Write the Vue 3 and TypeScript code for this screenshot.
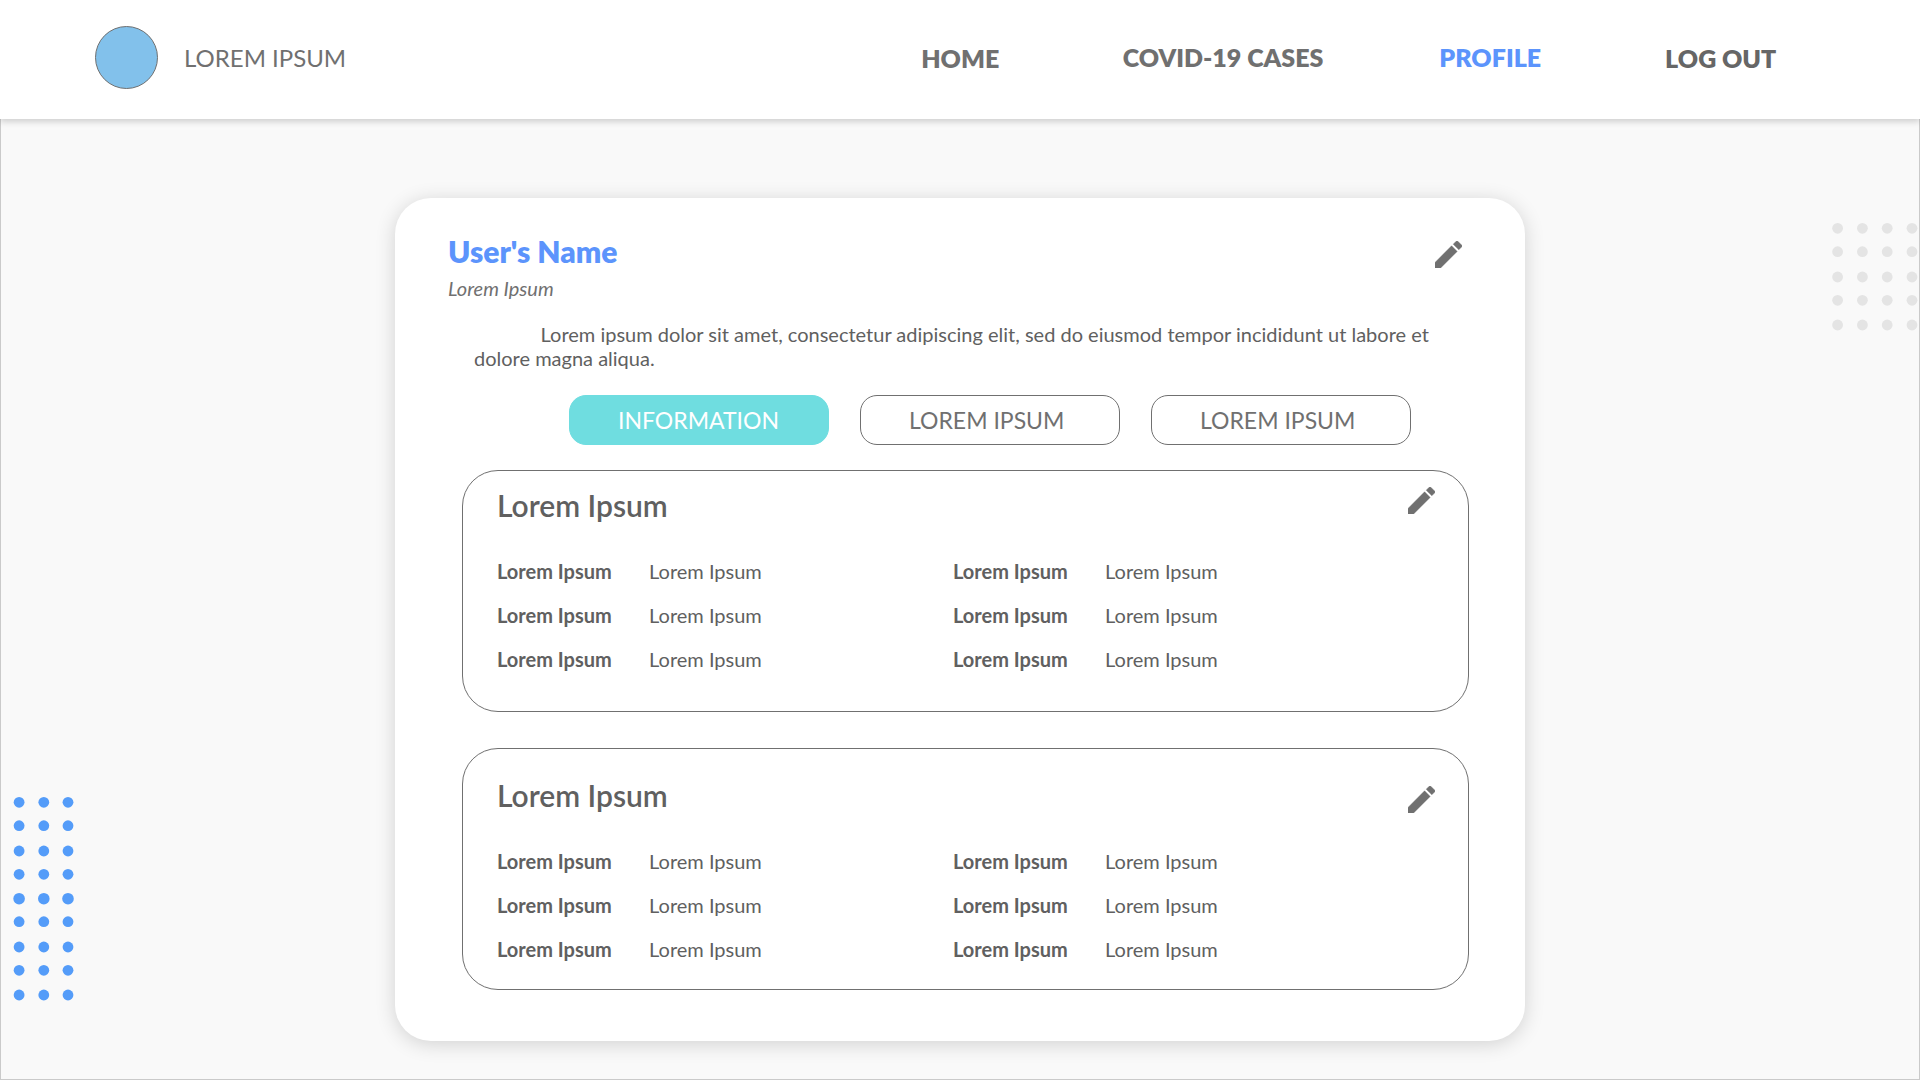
<script setup lang="ts">
interface NavItem {
  label: string
  key: string
}

interface Panel {
  id: string
  title: string
  rows: number
}

const nav: NavItem[] = [
  { label: 'HOME', key: 'home' },
  { label: 'COVID-19 CASES', key: 'cases' },
  { label: 'PROFILE', key: 'profile' },
  { label: 'LOG OUT', key: 'logout' },
]

const tabs: string[] = ['INFORMATION', 'LOREM IPSUM', 'LOREM IPSUM']

const panels: Panel[] = [
  { id: 'first', title: 'Lorem Ipsum', rows: 3 },
  { id: 'second', title: 'Lorem Ipsum', rows: 3 },
]

const pencil =
  'M3 17.25V21h3.75L17.81 9.94l-3.75-3.75L3 17.25zM20.71 7.04a1 1 0 0 0 0-1.41l-2.34-2.34a1 1 0 0 0-1.41 0l-1.83 1.83 3.75 3.75 1.83-1.83z'

const blueX = [7.1, 31.8, 56]
const blueY = [7.3, 30.7, 56, 79.3, 103.7, 126.7, 152, 175.3, 200]
const greyX = [7.6, 32.4, 57.2, 82]
const greyY = [7.3, 30.7, 56, 79.3, 104]
</script>

<template>
  <div class="page">
    <header class="topbar">
      <div class="logo"></div>
      <span class="brand">LOREM IPSUM</span>
      <nav class="nav">
        <a v-for="item in nav" :key="item.key" :class="['link', item.key]">{{ item.label }}</a>
      </nav>
    </header>

    <main class="content">
      <svg class="dots dots-blue" width="66" height="210" fill="#549cf9">
        <template v-for="(y, r) in blueY" :key="y">
          <circle v-for="x in blueX" :key="x" :cx="x" :cy="y" :r="r === 4 ? 5.8 : 5.4" />
        </template>
      </svg>
      <svg class="dots dots-grey" width="89" height="112" fill="#e4e4e4">
        <template v-for="y in greyY" :key="y">
          <circle v-for="x in greyX" :key="x" :cx="x" :cy="y" r="5.4" />
        </template>
      </svg>

      <section class="card">
        <div class="head">
          <div>
            <h1 class="name">User's Name</h1>
            <p class="role">Lorem Ipsum</p>
          </div>
          <svg class="pencil" viewBox="3 3 18 18"><path :d="pencil" /></svg>
        </div>
        <p class="bio">
          Lorem ipsum dolor sit amet, consectetur adipiscing elit, sed do eiusmod tempor incididunt ut labore et dolore magna aliqua.
        </p>
        <div class="tabs">
          <div v-for="(tab, i) in tabs" :key="i" :class="['tab', { active: i === 0 }]">{{ tab }}</div>
        </div>
        <article v-for="panel in panels" :key="panel.id" :class="['panel', panel.id]">
          <div class="panel-head">
            <h2 class="title">{{ panel.title }}</h2>
            <svg class="pencil" viewBox="3 3 18 18"><path :d="pencil" /></svg>
          </div>
          <div class="fields">
            <dl v-for="col in 2" :key="col" class="column">
              <div v-for="row in panel.rows" :key="row" class="field">
                <dt>Lorem Ipsum</dt>
                <dd>Lorem Ipsum</dd>
              </div>
            </dl>
          </div>
        </article>
      </section>
    </main>
  </div>
</template>

<style>
body {
  margin: 0;
  background: #f9f9f9;
}
</style>

<style scoped>
.page {
  display: flex;
  flex-direction: column;
  width: 1920px;
  height: 1080px;
  overflow: hidden;
  background: #f9f9f9;
  color: #606060;
  font-family: Lato, 'Open Sans', sans-serif;
  font-size: 20px;
  line-height: 24px;
}

.topbar {
  position: relative;
  z-index: 1;
  display: flex;
  flex: none;
  align-items: flex-start;
  box-sizing: border-box;
  height: 119px;
  padding: 26px 143.7px 0 95px;
  background: #fff;
  box-shadow: 0 3px 6px rgba(0, 0, 0, 0.16);
}

.logo {
  box-sizing: border-box;
  width: 63px;
  height: 63px;
  border: 1px solid #707070;
  border-radius: 50%;
  background: #82c1eb;
}

.brand {
  margin: 17px 0 0 26px;
  color: #707070;
  font-size: 24px;
  line-height: 29px;
}

.nav {
  display: flex;
  gap: 124px;
  margin: 16px 0 0 auto;
  color: #707070;
  font-size: 25px;
  font-weight: 800;
  line-height: 30px;
}

.home,
.logout {
  margin-top: 1px;
}

.cases {
  margin-left: -0.5px;
}

.profile {
  margin-left: -8px;
  color: #5c94fc;
}

.logout {
  color: #666;
}

.content {
  position: relative;
  box-sizing: border-box;
  flex: 1;
  padding: 79px 0 0 394px;
  border: 1px solid #cacaca;
  border-top: 0;
}

.dots {
  position: absolute;
}

.dots-blue {
  left: 11px;
  top: 676px;
}

.dots-grey {
  right: 0;
  top: 102px;
}

.card {
  position: relative;
  box-sizing: border-box;
  width: 1130px;
  height: 843px;
  padding: 35px 56px 0 53px;
  border-radius: 36px;
  background: #fff;
  box-shadow: 0 3px 20px rgba(0, 0, 0, 0.16);
}

.head,
.panel-head {
  display: flex;
  justify-content: space-between;
  align-items: flex-start;
}

.pencil {
  flex: none;
  width: 27px;
  height: 27px;
  fill: #707070;
  stroke: #707070;
  stroke-width: 0.25;
}

.head .pencil {
  margin: 8px 7px 0 0;
}

.name {
  margin: 0;
  color: #5c94fc;
  font-size: 30px;
  font-weight: 800;
  line-height: 36px;
}

.role {
  margin: 7px 0 0;
  color: #707070;
  font-style: italic;
}

.bio {
  width: 970px;
  margin: 22px 0 0 26px;
  text-indent: 66.5px;
}

.tabs {
  display: flex;
  gap: 31px;
  margin: 25px 0 0 121px;
}

.tab {
  box-sizing: border-box;
  width: 260px;
  height: 50px;
  padding: 10px 0 0 48px;
  border: 1px solid #707070;
  border-radius: 17px;
  color: #707070;
  font-size: 23px;
  line-height: 28px;
}

.tab.active {
  border-color: #6fdde0;
  background: #6fdde0;
  color: #fff;
}

.panel {
  box-sizing: border-box;
  width: 1007px;
  height: 242px;
  margin-left: 14px;
  padding: 0 28px 0 34px;
  border: 1px solid #707070;
  border-radius: 36px;
}

.panel.first {
  margin-top: 25px;
  padding-top: 16px;
}

.panel.second {
  margin-top: 36px;
  padding-top: 28px;
}

.panel-head {
  height: 36px;
}

.title {
  margin: 0;
  font-size: 30px;
  font-weight: 600;
  line-height: 36px;
}

.panel .pencil {
  margin-right: 5px;
}

.panel.second .pencil {
  margin-top: 9px;
}

.fields {
  display: grid;
  grid-template-columns: 456px 456px;
  margin-top: 36px;
}

.column {
  display: flex;
  flex-direction: column;
  gap: 20px;
  margin: 0;
}

.field {
  display: grid;
  grid-template-columns: 152px 1fr;
}

dt {
  font-weight: 700;
}

dd {
  margin: 0;
}
</style>
